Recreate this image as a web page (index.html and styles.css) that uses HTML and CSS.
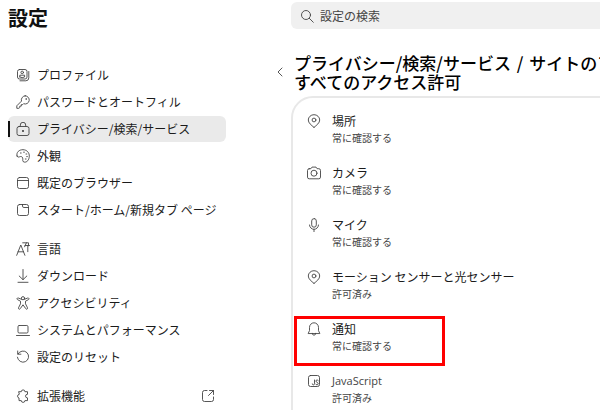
FILE: index.html
```html
<!DOCTYPE html>
<html lang="ja">
<head>
<meta charset="utf-8">
<title>設定</title>
<link rel="stylesheet" href="styles.css">
</head>
<body>

<aside class="sidebar">
  <h1>設定</h1>
  <nav>
    <ul>
      <li><a href="#"><svg class="icon" viewBox="0 0 14 14"><rect x="1.5" y="1.5" width="9.5" height="9.5" rx="2"/><circle cx="6.2" cy="4.4" r="1.3"/><path d="M3.8 9V7.2h4.8V9q-2.4 1.4-4.8 0M12.8 3.5v6.3a3 3 0 0 1-3 3H4"/></svg>プロファイル</a></li>
      <li><a href="#"><svg class="icon" viewBox="0 0 14 14"><path d="M9.2.8a4.1 4.1 0 1 1-1.6 7.9L6.7 9.6H5.3v1.5H3.8v1.4l-.9.8H.8v-2.5l4.7-4.7A4.1 4.1 0 0 1 9.2.8z"/><circle class="dot" cx="10.2" cy="4" r=".8"/></svg>パスワードとオートフィル</a></li>
      <li><a href="#" class="active" aria-current="page"><svg class="icon" viewBox="0 0 14 14"><rect x="1" y="4.5" width="12" height="9" rx="2"/><path d="M4.3 4.5V3a2.7 2.7 0 0 1 5.4 0v1.5"/><circle class="dot" cx="7" cy="9" r=".9"/></svg>プライバシー/検索/サービス</a></li>
      <li><a href="#"><svg class="icon" viewBox="0 0 14 14"><path d="M1.1 7.1C-.2 3.2 3.4.6 7 .7c4 .1 6.4 3 6.3 6.5-.1 3.7-2.4 6.3-5 5.9-2.4-.4-1.2-2.5-1.6-4C6.2 7.4 5 7.2 3.6 7.8c-1.2.5-2.1.4-2.5-.7z"/><path d="M4.4 4h.8M7.6 3.2h.8M10 5h.8M10.7 7.6h.7M9.3 10h.8"/></svg>外観</a></li>
      <li><a href="#"><svg class="icon" viewBox="0 0 14 14"><rect x="1.5" y="1.5" width="11" height="11" rx="2"/><path d="M1.5 4.5h11"/></svg>既定のブラウザー</a></li>
      <li><a href="#"><svg class="icon" viewBox="0 0 14 14"><rect x="1.5" y="1.5" width="11" height="11" rx="2"/><path d="M6.5 1.5v1.6q0 1.4 1.4 1.4h4.6"/></svg>スタート/ホーム/新規タブ ページ</a></li>
    </ul>
    <ul>
      <li><a href="#"><svg class="icon" viewBox="0 0 14 14"><path d="M.7 13.3 4.8 3l4.1 10.3M2 9.8h5.6M6.7.8h5.8v3M9 3.5h4.5M11.8 3.5v6.2M8.6 4.8l1.8-4"/></svg>言語</a></li>
      <li><a href="#"><svg class="icon" viewBox="0 0 14 14"><path d="M7 .5v10M3.2 7 7 10.7 10.8 7M2 13.3h10"/></svg>ダウンロード</a></li>
      <li><a href="#"><svg class="icon" viewBox="0 0 14 14"><circle cx="7" cy="2.2" r="1.6"/><path d="M5.5 3.3 2.3 2C1 1.6.5 3.1 1.6 3.7l2.9 1.5v2.6l-2 4c-.5 1.3 1.2 2 1.8.8L7 8.8l2.7 3.8c.6 1.2 2.3.5 1.8-.8l-2-4V5.2l2.9-1.5c1.1-.6.6-2.1-.7-1.7L8.5 3.3"/></svg>アクセシビリティ</a></li>
      <li><a href="#"><svg class="icon" viewBox="0 0 14 14"><rect x="2" y="2.5" width="10" height="7.5" rx="1.2"/><path d="M.5 12.5h13"/></svg>システムとパフォーマンス</a></li>
      <li><a href="#"><svg class="icon" viewBox="0 0 14 14"><path d="M2 4a5.6 5.6 0 1 1-.6 3.2M1.7 1v3.2h3.2"/></svg>設定のリセット</a></li>
    </ul>
    <ul>
      <li><a href="#"><svg class="icon" viewBox="0 0 14 14"><path d="M3 2.7h2.3a1.8 1.8 0 0 1 3.6 0h2.6v2.6q-2 0-2 1.8t2 1.8v2.7H8.9a1.8 1.8 0 0 1-3.6 0H3V9a1.9 1.9 0 0 1 0-3.7z"/></svg>拡張機能<svg class="icon external" viewBox="0 0 14 14"><path d="M6 1.5H3.5a2 2 0 0 0-2 2v7a2 2 0 0 0 2 2h7a2 2 0 0 0 2-2V8M8.5 1.5h4v4M12.5 1.5l-5 5"/></svg></a></li>
    </ul>
  </nav>
</aside>

<main>
  <label class="search">
    <svg class="icon" viewBox="0 0 14 14"><circle cx="6" cy="6" r="4.5"/><path d="m9.3 9.3 4 4"/></svg>
    <input type="search" placeholder="設定の検索" aria-label="設定の検索">
  </label>

  <div class="heading">
    <button type="button" class="back" aria-label="戻る"><svg viewBox="0 0 6 10"><path d="M5 1 1 5l4 4"/></svg></button>
    <h2>プライバシー/検索/サービス <span class="sep">/</span> サイトのア<br>すべてのアクセス許可</h2>
  </div>

  <ul class="card">
    <li>
      <svg class="icon" viewBox="0 0 14 14"><path d="M7 13.4C4.2 11 1.3 9 1.3 6a5.7 5.3 0 0 1 11.4 0c0 3-2.9 5-5.7 7.4z"/><circle cx="7" cy="6" r="1.9"/></svg>
      <div><h3>場所</h3><p>常に確認する</p></div>
    </li>
    <li>
      <svg class="icon" viewBox="0 0 14 14"><path d="M2.2 2.7h1.7L5 1.1h4l1.1 1.6h1.7q1.7 0 1.7 1.7v6.7q0 1.7-1.7 1.7H2.2q-1.7 0-1.7-1.7V4.4q0-1.7 1.7-1.7z"/><circle cx="7" cy="7.2" r="3"/></svg>
      <div><h3>カメラ</h3><p>常に確認する</p></div>
    </li>
    <li>
      <svg class="icon" viewBox="0 0 14 14"><rect x="4.7" y=".6" width="4.6" height="8.6" rx="2.3"/><path d="M2.5 7a4.5 4.3 0 0 0 9 0M7 11.3v2.4"/></svg>
      <div><h3>マイク</h3><p>常に確認する</p></div>
    </li>
    <li>
      <svg class="icon" viewBox="0 0 14 14"><path d="M7 13.4C4.2 11 1.3 9 1.3 6a5.7 5.3 0 0 1 11.4 0c0 3-2.9 5-5.7 7.4z"/><circle cx="7" cy="6" r="1.9"/></svg>
      <div><h3>モーション センサーと光センサー</h3><p>許可済み</p></div>
    </li>
    <li class="marked">
      <svg class="icon" viewBox="0 0 14 14"><path d="M1.3 11.2 2.5 8.6V5.4a4.5 4.6 0 0 1 9 0v3.2l1.2 2.6zM5.3 11.3a1.7 1.9 0 0 0 3.4 0"/></svg>
      <div><h3>通知</h3><p>常に確認する</p></div>
    </li>
    <li>
      <svg class="icon" viewBox="0 0 14 14"><rect x="1.5" y="1.5" width="11" height="11" rx="2"/><path d="M7.5 6v3.7q0 1.2-1.2 1.2-1 0-1-1M11.3 6.6Q10.8 6 10 6q-1.1 0-1.1 1.1c0 1.3 2.3 1.1 2.3 2.6 0 1.5-2.1 1.5-2.6.4"/></svg>
      <div><h3 lang="en">JavaScript</h3><p>許可済み</p></div>
    </li>
  </ul>
</main>

</body>
</html>
```
FILE: styles.css
```css
*, *::before, *::after { box-sizing: border-box; }
body { display: flex; gap: 50px; height: 100vh; margin: 0; padding-left: 8px; overflow: hidden; background: #fff; color: #1b1b1b; font: 12px/18px "Noto Sans CJK JP", sans-serif; }
h1, h2, h3, p, ul { margin: 0; padding: 0; }
ul { list-style: none; }

.icon { flex: none; width: 14px; height: 14px; }
svg { fill: none; stroke: #444; stroke-width: 0.9; stroke-linecap: round; stroke-linejoin: round; }
.dot { fill: #222; stroke: none; }

.sidebar { flex: none; width: 216px; }
h1 { height: 62px; padding-top: 4px; font-size: 20px; line-height: 28px; font-weight: 700; color: #111; }
nav ul { display: grid; gap: 1px; margin-bottom: 13px; }
nav a { display: flex; align-items: center; gap: 7px; height: 26px; padding: 0 9px 0 8px; border-radius: 6px; color: inherit; text-decoration: none; white-space: nowrap; }
nav a.active { position: relative; background: #eaeaea; }
nav a.active::before { content: ""; position: absolute; left: 0; top: 5px; width: 2px; height: 16px; background: #111; }
.external { margin-left: auto; }

main { flex: 1 0 560px; padding-top: 2px; }
.search { display: flex; align-items: center; gap: 6px; height: 27px; margin-left: 17px; padding-left: 9px; border-radius: 6px; background: #f0f0f0; }
.search input { flex: 1; border: 0; padding: 0; outline: 0; background: none; font: inherit; color: inherit; }
.search input::placeholder { color: #444; opacity: 1; }

.heading { display: flex; align-items: center; margin: 24px 0 5px; }
.back { width: 20px; padding: 0 3px; border: 0; background: none; }
.back svg { display: block; width: 6px; height: 10px; }
h2 { font-size: 17px; line-height: 19px; font-weight: 500; color: #000; white-space: nowrap; }
.sep { margin: 0 2px; }

.card { margin-left: 17px; padding: 14px; border: 2px solid #e8e8e8; border-radius: 22px; }
.card li { display: flex; gap: 11px; position: relative; height: 52px; }
.card .icon { margin-top: 2px; }
h3 { font-size: 12px; line-height: 18px; font-weight: 400; }
h3:lang(en) { font-family: "Open Sans", sans-serif; font-size: 11px; color: #444; }
.card p { font-size: 10px; line-height: 16px; color: #444; }

/* red frame round the highlighted permission */
.marked::after { content: ""; position: absolute; left: -13px; top: -4px; width: 151px; height: 50px; border: 3px solid #f00; }
```
